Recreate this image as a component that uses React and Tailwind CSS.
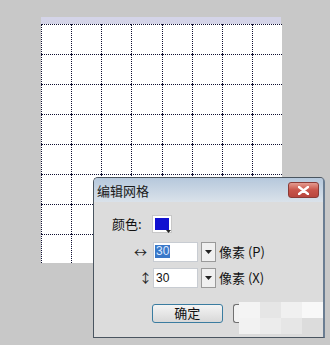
import React from "react";

const FONT = { fontFamily: '"Noto Sans CJK SC", "Liberation Sans", sans-serif' };

function GridCanvas() {
  const cells = Array.from({ length: 64 });
  return (
    <div className="pl-[41px] pt-[17px]">
      <div className="w-[240px] h-[7px] bg-[#d4d4e8]" />
      <div className="grid grid-cols-8 w-[241px] bg-white">
        {cells.map((_, i) => (
          <div
            key={i}
            className={
              i >= 56
                ? "h-[29px] border-l border-t border-dotted border-[#111133]"
                : "h-[30px] border-l border-t border-dotted border-[#111133]"
            }
          />
        ))}
      </div>
    </div>
  );
}

function Dropdown() {
  return (
    <div className="w-[15px] h-[20px] ml-[3px] bg-[#f0f0f0] border border-[#9a9a9a] flex items-center justify-center">
      <svg width="7" height="4" viewBox="0 0 7 4">
        <path d="M0 0h7L3.5 4z" fill="#222" />
      </svg>
    </div>
  );
}

function Dialog() {
  return (
    <div
      className="absolute left-[93px] top-[177px] w-[232px] h-[161px] bg-[#dcdcdc] border border-[#4a5560] border-r-[2px] border-r-[#6a7d92] rounded-t-[5px] overflow-hidden"
      style={FONT}
    >
      <div className="h-[24px] bg-gradient-to-b from-[#b6c8dc] to-[#dae2ea] flex items-center justify-between pl-[3px] pr-[4px]">
        <span className="text-[13px] text-[#1a1a1a] leading-none">编辑网格</span>
        <div className="w-[31px] h-[16px] rounded-[3px] border border-[#8a3a36] bg-gradient-to-b from-[#e39a90] via-[#c9544a] to-[#b8463e] flex items-center justify-center">
          <svg width="11" height="9" viewBox="0 0 11 9">
            <path d="M1 1l9 7M10 1L1 8" stroke="#fff" strokeWidth="2.4" strokeLinecap="round" />
          </svg>
        </div>
      </div>

      <div className="flex items-center pl-[18px] mt-[12px]">
        <span className="text-[13px] text-[#111] w-[40px]">颜色:</span>
        <div className="relative w-[20px] h-[18px] bg-white border border-[#c8c8c8] p-[2px]">
          <div className="w-full h-full bg-[#1010d0]" />
          <svg className="absolute right-[0px] bottom-[-1px]" width="5" height="3" viewBox="0 0 5 3">
            <path d="M0 0h5L2.5 3z" fill="#222" />
          </svg>
        </div>
      </div>

      <div className="flex items-center mt-[8px] pl-[40px]">
        <span className="w-[19px] text-[13px] text-[#222]">↔</span>
        <div className="w-[45px] h-[20px] bg-white border border-[#c8ccd2] flex items-center pl-[1px]">
          <span className="text-[12px] leading-[13px] bg-[#3a78c8] text-[#dde8ff] px-[1px]" style={{ fontFamily: '"Liberation Sans", sans-serif' }}>30</span>
        </div>
        <Dropdown />
        <span className="ml-[3px] text-[13px] text-[#111]">像素 (P)</span>
      </div>

      <div className="flex items-center mt-[6px] pl-[45px]">
        <span className="w-[14px] text-[13px] text-[#222]">↕</span>
        <div className="w-[45px] h-[20px] bg-white border border-[#c8ccd2] flex items-center pl-[2px]">
          <span className="text-[12px] text-[#111]" style={{ fontFamily: '"Liberation Sans", sans-serif' }}>30</span>
        </div>
        <Dropdown />
        <span className="ml-[3px] text-[13px] text-[#111]">像素 (X)</span>
      </div>

      <div className="flex items-start mt-[16px] pl-[58px]">
        <div className="w-[72px] h-[19px] rounded-[3px] border border-[#3a7ca0] bg-gradient-to-b from-[#f4f4f4] to-[#d8d8d8] flex items-center justify-center text-[13px] text-[#111]">
          确定
        </div>
        <div className="ml-[10px] w-[8px] h-[19px] border border-r-0 border-[#707070] rounded-l-[3px] bg-[#f2f2f2]" />
        <div className="grid grid-cols-4 w-[86px] h-[32px] -ml-[2px] mt-[-2px]">
          <div className="bg-[#f4f4f4]" />
          <div className="bg-[#e6e6e6]" />
          <div className="bg-[#f0f0f0]" />
          <div className="bg-[#f8f8f8]" />
          <div className="bg-[#f2f2f2]" />
          <div className="bg-[#ececec]" />
          <div className="bg-[#e6e6e6]" />
          <div className="bg-[#dcdcdc]" />
        </div>
      </div>
    </div>
  );
}

export default function App() {
  return (
    <div className="relative w-[330px] h-[345px] bg-[#c8c8c8] overflow-hidden">
      <GridCanvas />
      <Dialog />
    </div>
  );
}
